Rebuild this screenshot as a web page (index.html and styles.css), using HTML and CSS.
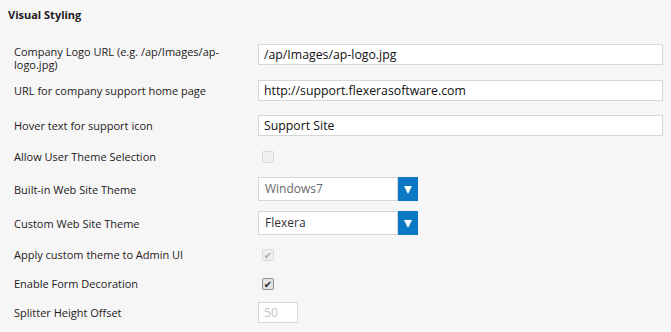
FILE: index.html
```html
<!DOCTYPE html>
<html lang="en">
<head>
  <meta charset="UTF-8" />
  <title>Visual Styling</title>
  <link rel="stylesheet" href="styles.css">
</head>
<body>
  <div class="section">
    <h3 class="section-title">Visual Styling</h3>

    <div class="form">
      <div class="row row-text">
        <label>Company Logo URL (e.g. /ap/Images/ap-logo.jpg)</label>
        <input class="text" type="text" value="/ap/Images/ap-logo.jpg">
      </div>
      <div class="row row-text">
        <label>URL for company support home page</label>
        <input class="text" type="text" value="http://support.flexerasoftware.com">
      </div>
      <div class="row row-text">
        <label>Hover text for support icon</label>
        <input class="text" type="text" value="Support Site">
      </div>
      <div class="row row-check first-check">
        <label>Allow User Theme Selection</label>
        <span class="check disabled"></span>
      </div>
      <div class="row row-select">
        <label>Built-in Web Site Theme</label>
        <div class="select disabled">
          <span class="select-value">Windows7</span>
          <span class="select-btn"></span>
        </div>
      </div>
      <div class="row row-select last-select">
        <label>Custom Web Site Theme</label>
        <div class="select">
          <span class="select-value">Flexera</span>
          <span class="select-btn"></span>
        </div>
      </div>
      <div class="row row-check">
        <label>Apply custom theme to Admin UI</label>
        <span class="check disabled checked">&#10004;</span>
      </div>
      <div class="row row-check">
        <label>Enable Form Decoration</label>
        <span class="check checked">&#10004;</span>
      </div>
      <div class="row row-text">
        <label>Splitter Height Offset</label>
        <input class="text small" type="text" value="50" disabled>
      </div>
    </div>
  </div>
</body>
</html>
```

FILE: styles.css
```css
* {
  box-sizing: border-box;
}

body {
  margin: 0;
  background: #f6f6f6;
  font-family: "Open Sans", "DejaVu Sans", sans-serif;
  color: #1e1a22;
}

.section {
  padding: 7px 8px 0 8px;
}

.section-title {
  margin: 0;
  font-size: 11px;
  font-weight: bold;
  line-height: 16px;
}

.form {
  padding: 21px 0 0 6px;
}

.row {
  display: grid;
  grid-template-columns: 244px 1fr;
  align-items: center;
  min-height: 21px;
}

.row label {
  font-size: 11px;
  line-height: 13px;
  padding-right: 20px;
}

.row-text {
  margin-bottom: 14px;
}

.row-text:first-child {
  align-items: start;
  margin-bottom: 9px;
}

.row-text:first-child label {
  padding-top: 1px;
}

.row-check {
  margin-bottom: 8px;
}

.first-check {
  margin-top: -4px;
  margin-bottom: 10px;
}

.row-select {
  margin-bottom: 10px;
  min-height: 24px;
}

.last-select {
  margin-bottom: 9px;
}

.text {
  height: 21px;
  width: 405px;
  border: 1px solid #d6d6d6;
  background: #fff;
  font-family: inherit;
  font-size: 12.3px;
  color: #111;
  padding: 0 5px;
  outline: none;
}

.text.small {
  width: 40px;
  color: #c2c2c2;
}

.check {
  width: 12px;
  height: 12px;
  margin-left: 4px;
  border: 1px solid #cfcfcf;
  border-radius: 2px;
  background: #ececec;
  font-size: 10px;
  line-height: 10px;
  text-align: center;
  color: #222;
}

.check.disabled {
  border-color: #d8d8d8;
  background: #f0f0f0;
}

.check.disabled.checked {
  color: #a8a8a8;
}

.check.checked:not(.disabled) {
  border-color: #8f8f8f;
  background: #e4e4e4;
}

.select {
  display: flex;
  width: 160px;
  height: 24px;
}

.select-value {
  flex: 1;
  border: 1px solid #d6d6d6;
  background: #fff;
  font-size: 12px;
  line-height: 22px;
  padding-left: 6px;
  color: #333;
}

.select.disabled .select-value {
  color: #6a6a6a;
}

.select-btn {
  width: 20px;
  background: #0a78c2;
  position: relative;
}

.select-btn::after {
  content: "";
  position: absolute;
  left: 6px;
  top: 9px;
  border-left: 4px solid transparent;
  border-right: 4px solid transparent;
  border-top: 8px solid #fff;
}
```
